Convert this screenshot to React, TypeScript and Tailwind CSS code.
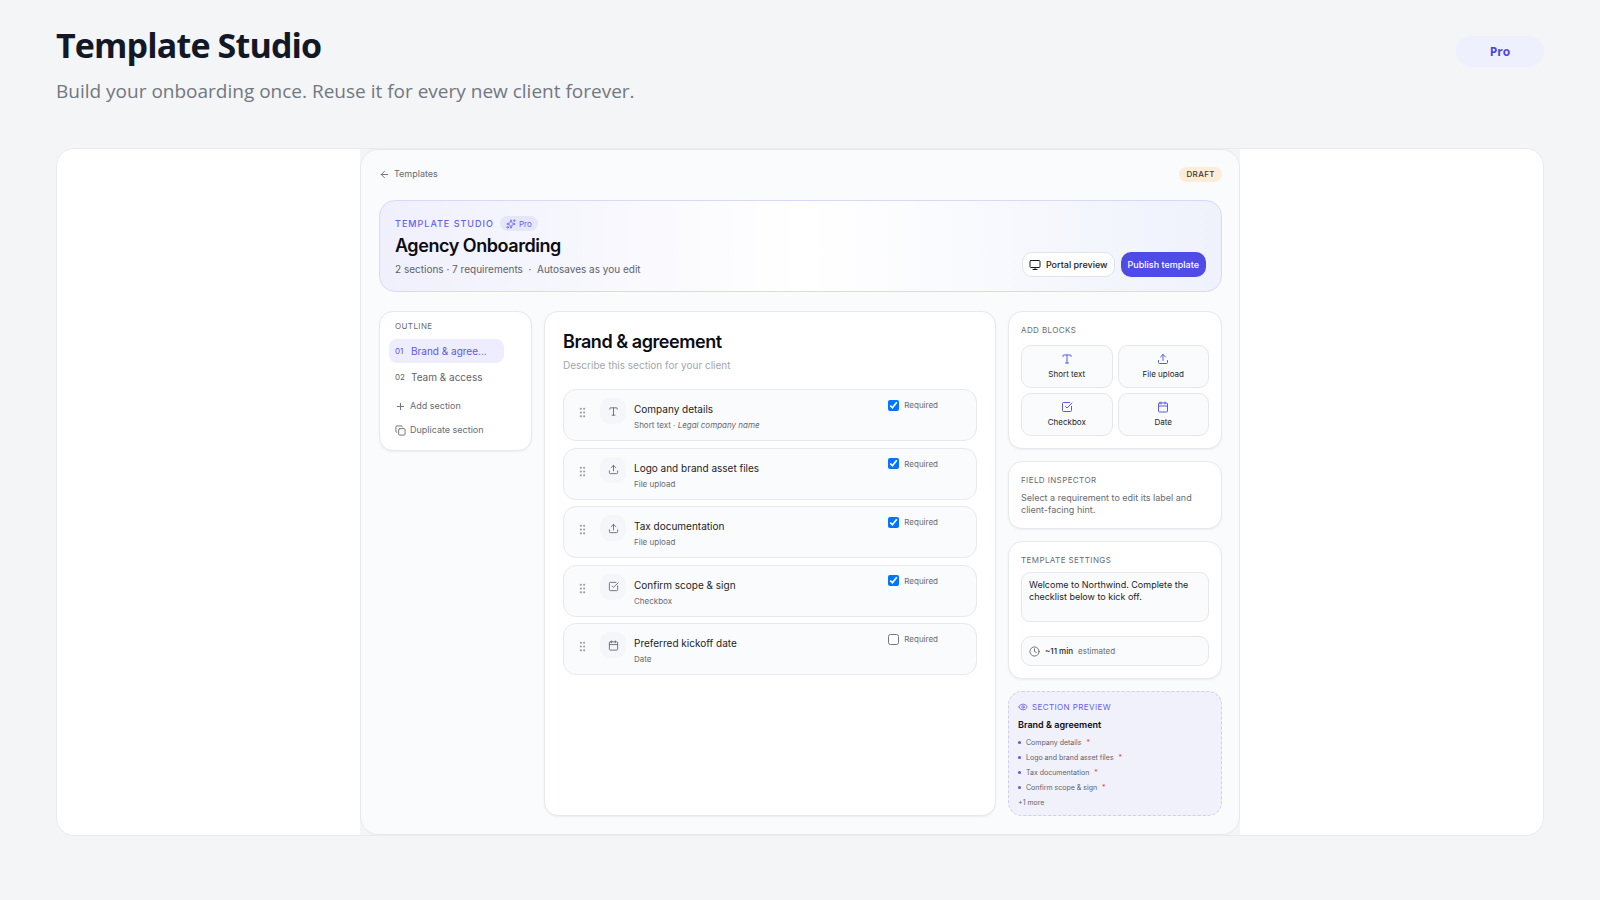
import React from "react";
import {
  ArrowLeft,
  Calendar,
  Clock,
  Copy,
  Eye,
  GripVertical,
  Monitor,
  Plus,
  Sparkles,
  SquareCheckBig,
  Type,
  Upload,
  type LucideIcon,
} from "lucide-react";

type Requirement = {
  title: string;
  kind: string;
  hint?: string;
  icon: LucideIcon;
  required: boolean;
};

const requirements: Requirement[] = [
  { title: "Company details", kind: "Short text", hint: "Legal company name", icon: Type, required: true },
  { title: "Logo and brand asset files", kind: "File upload", icon: Upload, required: true },
  { title: "Tax documentation", kind: "File upload", icon: Upload, required: true },
  { title: "Confirm scope & sign", kind: "Checkbox", icon: SquareCheckBig, required: true },
  { title: "Preferred kickoff date", kind: "Date", icon: Calendar, required: false },
];

const blocks: { label: string; icon: LucideIcon }[] = [
  { label: "Short text", icon: Type },
  { label: "File upload", icon: Upload },
  { label: "Checkbox", icon: SquareCheckBig },
  { label: "Date", icon: Calendar },
];

const card = "rounded-[14px] border border-[#e8e9ed] bg-white shadow-[0_1px_2px_rgba(0,0,0,0.06)]";
const label = "text-[8px] leading-3 tracking-wider text-[#686b73] uppercase";

function Hero() {
  return (
    <section className="mt-[18px] flex items-end justify-between rounded-2xl border border-[#d9d8fa] bg-linear-to-r from-[#eff0fc] via-white to-[#eff2fc] px-[15px] pt-[15px] pb-[14px]">
      <div>
        <div className="flex items-center gap-[6px]">
          <span className="text-[9px] leading-[14px] font-medium tracking-[1px] text-[#6361ea] uppercase">
            Template Studio
          </span>
          <span className="flex h-[15px] items-center gap-[3px] rounded-full bg-[#e6e6fb] px-[6px] text-[8px] text-[#6361ea]">
            <Sparkles size={10} />
            Pro
          </span>
        </div>
        <h2 className="text-[18px] leading-[30px] font-semibold tracking-tight text-[#0b0c14]">Agency Onboarding</h2>
        <p className="text-[10px] leading-4 whitespace-pre text-[#5f626b]">
          2 sections · 7 requirements{"  ·  "}Autosaves as you edit
        </p>
      </div>
      <div className="flex gap-[6px]">
        <button className="flex h-[25px] items-center gap-[5px] rounded-[10px] border border-[#e3e4e9] bg-white px-[6px] text-[9px] font-medium text-[#1b1d25]">
          <Monitor size={12} />
          Portal preview
        </button>
        <button className="h-[25px] rounded-[10px] bg-[#4f4be6] px-[7px] text-[9px] font-medium text-white">
          Publish template
        </button>
      </div>
    </section>
  );
}

function Outline() {
  return (
    <nav aria-label="Outline" className={`${card} px-[9px] pt-2 pb-2`}>
      <h3 className={`${label} px-[6px]`}>Outline</h3>
      <button className="mt-[7px] flex h-6 w-[115px] items-center gap-[6px] rounded-lg bg-[#eeedfd] px-[6px] text-[10px] text-[#5b58e8]">
        <span className="w-[10px] text-left text-[8px]">01</span>
        Brand &amp; agree…
      </button>
      <button className="mt-[2px] flex h-6 w-[115px] items-center gap-[6px] px-[6px] text-[10px] text-[#5f626b]">
        <span className="w-[10px] text-left text-[8px]">02</span>
        Team &amp; access
      </button>
      <button className="mt-[5px] flex h-6 items-center gap-1 px-[6px] text-[9px] text-[#686b73]">
        <Plus size={11} />
        Add section
      </button>
      <button className="flex h-6 items-center gap-1 px-[6px] text-[9px] text-[#686b73]">
        <Copy size={11} />
        Duplicate section
      </button>
    </nav>
  );
}

function RequirementRow({ item }: { item: Requirement }) {
  const Icon = item.icon;
  return (
    <li className="flex h-[52px] rounded-[13px] border border-[#e8e9ed] bg-[#fafbfd] pt-2 pr-[38px] pl-3">
      <GripVertical size={13} className="mt-2 text-[#9b9ea6]" />
      <span className="ml-[11px] flex size-[26px] items-center justify-center rounded-[10px] bg-[#f5f6f9] text-[#686b73]">
        <Icon size={11} />
      </span>
      <div className="ml-2 flex-1 pt-[3px]">
        <h4 className="text-[10px] leading-4 text-[#1b1d25]">{item.title}</h4>
        <p className="text-[8px] leading-4 text-[#686b73]">
          {item.kind}
          {item.hint && (
            <>
              {" · "}
              <em>{item.hint}</em>
            </>
          )}
        </p>
      </div>
      <label className="flex h-[14px] items-center gap-[5px] text-[8px] text-[#686b73]">
        <input type="checkbox" defaultChecked={item.required} className="size-[11px]" />
        Required
      </label>
    </li>
  );
}

function SectionEditor() {
  return (
    <main className={`${card} px-[18px] pt-4`}>
      <h2 className="text-[18px] leading-[28px] font-semibold tracking-tight text-[#0b0c14]">Brand &amp; agreement</h2>
      <p className="text-[10px] leading-[18px] text-[#a3a5ab]">Describe this section for your client</p>
      <ul className="mt-[15px] flex min-h-[286px] flex-col justify-between">
        {requirements.map((item) => (
          <RequirementRow key={item.title} item={item} />
        ))}
      </ul>
    </main>
  );
}

function Sidebar() {
  return (
    <aside className="flex flex-col gap-3">
      <section className={`${card} p-3`}>
        <h3 className={label}>Add blocks</h3>
        <div className="mt-[9px] grid grid-cols-2 gap-[5px]">
          {blocks.map(({ label: name, icon: Icon }) => (
            <button
              key={name}
              className="flex h-[43px] flex-col items-center justify-center gap-[3px] rounded-[10px] border border-[#e6e7eb] bg-[#fafbfd] text-[8px] leading-3 text-[#1b1d25]"
            >
              <Icon size={12} className="text-[#5b58e8]" />
              {name}
            </button>
          ))}
        </div>
      </section>

      <section className={`${card} p-3`}>
        <h3 className={label}>Field inspector</h3>
        <p className="mt-[6px] text-[9px] leading-3 text-[#686b73]">
          Select a requirement to edit its label and client-facing hint.
        </p>
      </section>

      <section className={`${card} p-3`}>
        <h3 className={label}>Template settings</h3>
        <textarea
          aria-label="Welcome message"
          defaultValue="Welcome to Northwind. Complete the checklist below to kick off."
          className="mt-[6px] block h-[50px] w-full resize-none rounded-[9px] border border-[#e6e7eb] bg-[#fafbfd] px-[7px] py-[6px] text-[9px] leading-3 text-[#1b1d25]"
        />
        <div className="mt-[14px] flex h-[30px] items-center gap-[5px] rounded-[10px] border border-[#e6e7eb] bg-[#fafbfd] px-[7px] text-[8px] text-[#686b73]">
          <Clock size={11} />
          <span className="font-medium text-[#1b1d25]">~11 min</span>
          <span>estimated</span>
        </div>
      </section>

      <section className="rounded-[14px] border border-dashed border-[#cfcdf8] bg-[#f1f1fb] px-[9px] pt-2 pb-[5px]">
        <h3 className="flex items-center gap-1 text-[8px] leading-[14px] tracking-wider text-[#6361ea] uppercase">
          <Eye size={10} />
          Section preview
        </h3>
        <p className="mt-1 text-[9px] leading-[14px] font-semibold text-[#0b0c14]">Brand &amp; agreement</p>
        <ul className="mt-[3px] text-[7px] leading-[15px] text-[#5f626b]">
          {requirements.slice(0, 4).map((item) => (
            <li key={item.title} className="flex items-center gap-[5px]">
              <span className="size-[3px] rounded-full bg-[#5b58e8]" />
              {item.title}
              <span className="text-[#ee4444]">*</span>
            </li>
          ))}
          <li>+1 more</li>
        </ul>
      </section>
    </aside>
  );
}

export default function App() {
  return (
    <div className="min-h-screen bg-[#f3f5f7] px-14 pt-[22px] pb-[64px] font-['Inter',sans-serif]">
      <header className="flex items-start justify-between font-['Open_Sans','Noto_Sans',sans-serif]">
        <div>
          <h1 className="text-[34px] leading-[46px] font-bold tracking-tight text-[#121826]">Template Studio</h1>
          <p className="mt-2 text-[19px] leading-[30px] text-[#737782]">
            Build your onboarding once. Reuse it for every new client forever.
          </p>
        </div>
        <span className="mt-[14px] flex h-[31px] w-[88px] items-center justify-center rounded-full bg-[#eef0fe] text-[12px] font-bold text-[#4f46d6]">
          Pro
        </span>
      </header>

      <div className="mt-[42px] overflow-hidden rounded-[18px] border border-[#e9ebee] bg-white">
        <div className="mx-auto max-w-[880px] bg-[#f4f5f7]">
          <div className="rounded-[18px] border border-[#e6e8ec] bg-[#fafbfd] pt-4 pr-[17px] pb-[18px] pl-[18px]">
            <div className="flex items-center justify-between">
              <a href="#templates" className="flex items-center gap-1 text-[9px] leading-4 text-[#686b73]">
                <ArrowLeft size={11} />
                Templates
              </a>
              <span className="flex h-[15px] items-center rounded-full bg-[#fcecd8] px-[7px] text-[8px] font-medium tracking-wider text-[#4a3423]">
                DRAFT
              </span>
            </div>
            <Hero />
            <div className="mt-[19px] grid grid-cols-[153px_minmax(0,1fr)_214px] gap-3">
              <div>
                <Outline />
              </div>
              <SectionEditor />
              <Sidebar />
            </div>
          </div>
        </div>
      </div>
    </div>
  );
}
